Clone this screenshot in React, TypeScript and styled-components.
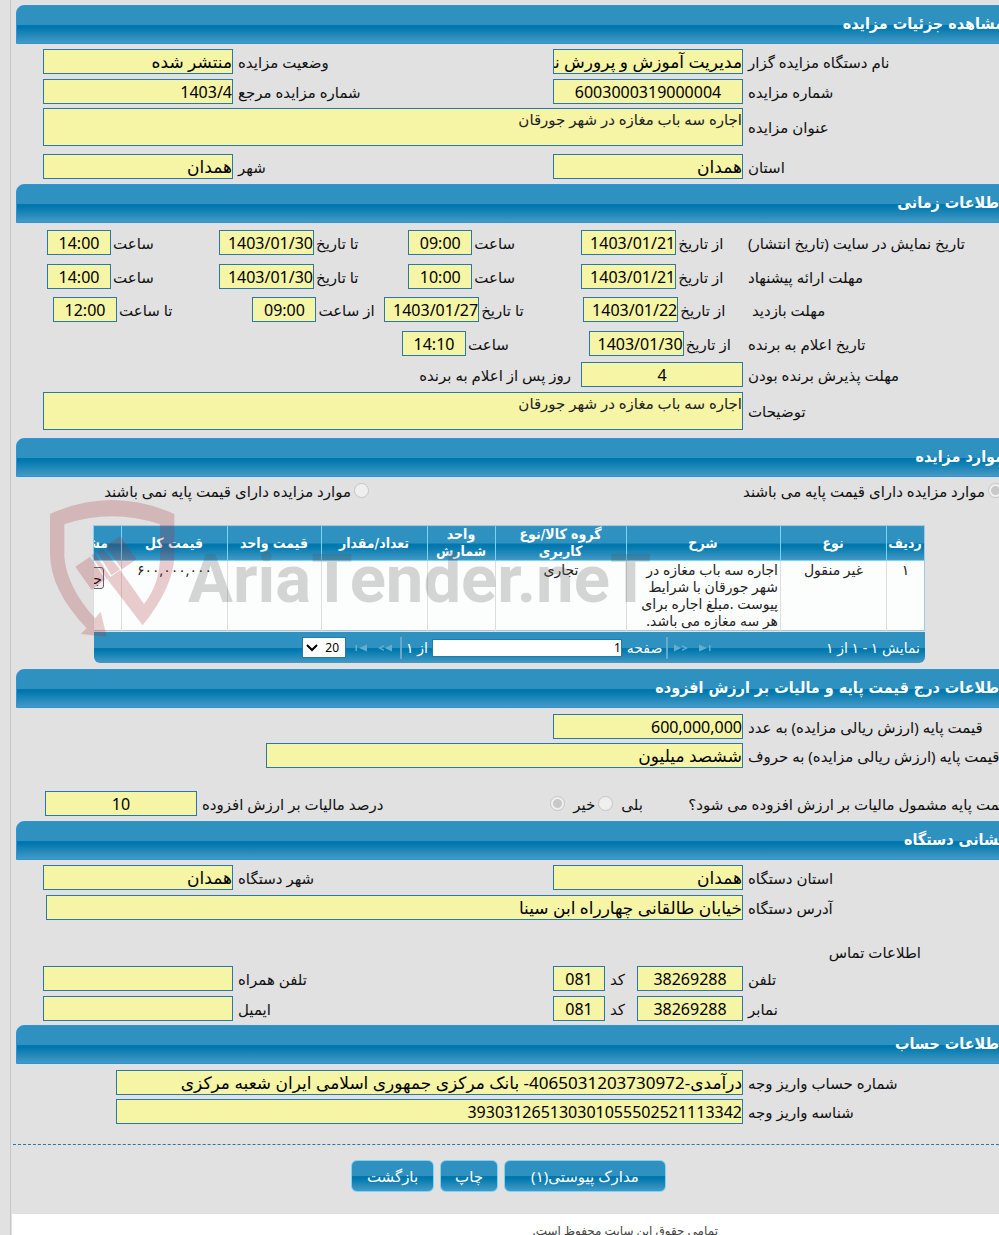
import React, { useId } from "react";
import styled, { createGlobalStyle } from "styled-components";

const GlobalStyle = createGlobalStyle`
  * { box-sizing: border-box; }
  body {
    margin: 0;
    background: #e1e1e1;
    color: #111;
    font-family: "Noto Sans", "DejaVu Sans", sans-serif;
    font-size: 15px;
    line-height: 20px;
  }
  input, textarea, button, select { font-family: inherit; margin: 0; }
`;

const headingFont = '"DejaVu Sans Condensed", "DejaVu Sans", sans-serif';
const glossy = "linear-gradient(#2f91c0 0 50%, #0078ae 51%, #0078ae 58%, #459ac5 100%)";

const Page = styled.div`
  overflow: hidden;
  padding-left: 10px;
`;

const Frame = styled.main`
  direction: rtl;
  border-left: 1px solid #c8c8c8;
  padding: 5px 0 0 1px;
`;

/* The form is wider than the window and runs off its right edge. */
const Wide = styled.div`
  margin-right: -12px;
`;

const Section = styled.section<{ $bottom?: number }>`
  position: relative;
  padding-bottom: ${(p) => p.$bottom ?? 5}px;
`;

const Title = styled.h2`
  margin: 0 0 0 4px;
  height: 39px;
  padding: 0 6px;
  border: 1px solid #2d93e0;
  border-radius: 8px 8px 0 0;
  background: ${glossy};
  color: #fff;
  font-family: ${headingFont};
  font-size: 16px;
  font-weight: 700;
  line-height: 36px;
  white-space: nowrap;
`;

const Row = styled.div<{ $top?: number; $end?: number }>`
  display: flex;
  align-items: center;
  margin-top: ${(p) => p.$top ?? 5}px;
  padding-left: ${(p) => p.$end ?? 31}px;
`;

const Label = styled.label<{ $grow?: number; $width?: number; $tight?: boolean }>`
  flex: ${(p) => (p.$width ? `0 0 ${p.$width}px` : `${p.$grow ?? 1} 1 0`)};
  min-width: 0;
  padding-left: ${(p) => (p.$tight ? 2 : 5)}px;
  text-align: left;
  white-space: nowrap;
`;

const Field = styled.input<{ $width?: number; $numeric?: boolean; $center?: boolean }>`
  flex: ${(p) => (p.$width ? `0 0 ${p.$width}px` : "1 1 0")};
  width: ${(p) => (p.$width ? `${p.$width}px` : "auto")};
  min-width: 0;
  height: 25px;
  padding: 0;
  border: 1px solid #2779aa;
  border-radius: 0;
  background: #f6f4a5;
  color: #000;
  font-size: ${(p) => (p.$numeric ? 16 : 17)}px;
  text-align: ${(p) => (p.$center ? "center" : "right")};
  outline-color: #2779aa;
`;

const Area = styled.textarea`
  flex: 1 1 0;
  height: 38px;
  padding: 0;
  border: 1px solid #2779aa;
  background: #f6f4a5;
  color: #222;
  font-size: 15px;
  line-height: 20px;
  resize: none;
`;

const Note = styled.span`
  flex: 1;
  padding-right: 10px;
`;

const Radio = styled.input.attrs({ type: "radio" })`
  appearance: none;
  flex: none;
  width: 15px;
  height: 15px;
  border: 1px solid #c6c6c6;
  border-radius: 50%;
  background: #efefef;
  &:checked { background: radial-gradient(circle, #c8c8c8 0 4px, #efefef 5px); }
`;

const ModeRow = styled.div`
  display: flex;
  justify-content: space-between;
  margin: 5px 8px 26px 357px;
  height: 17px;
`;

const Option = styled.label<{ $gap?: number }>`
  display: flex;
  align-items: center;
  gap: ${(p) => p.$gap ?? 3}px;
  white-space: nowrap;
`;

const OptionEnd = styled(Option)`
  width: 0;
`;

const TaxChoice = styled.div`
  display: flex;
  gap: 3px;
  padding-right: 43px;
`;

const ContactTitle = styled.h3`
  margin: 22px 90px 4px 0;
  font-size: 15px;
  font-weight: 400;
`;

const Grid = styled.div`
  margin: 0 86px 0 81px;
  overflow: hidden;
`;

const Table = styled.table`
  width: 100%;
  table-layout: fixed;
  border-collapse: collapse;
  border: 1px solid #a0c8e0;
  color: #222;
  font-size: 14px;
  line-height: 17px;
`;

const Head = styled.th<{ $width?: number; $cut?: boolean }>`
  width: ${(p) => (p.$width ? `${p.$width}px` : "auto")};
  height: 35px;
  padding: 0 ${(p) => (p.$cut ? 13 : 1)}px 0 0;
  overflow: hidden;
  border-left: 1px solid #77d5f7;
  border-bottom: 1px solid #77d5f7;
  background: ${glossy};
  color: #fff;
  font-family: ${headingFont};
  font-size: 14px;
  text-align: ${(p) => (p.$cut ? "right" : "center")};
  white-space: ${(p) => (p.$cut ? "nowrap" : "normal")};
`;

const Cell = styled.td<{ $start?: boolean; $cut?: boolean }>`
  height: 70px;
  padding: 0 ${(p) => (p.$cut ? 17 : 2)}px 0 ${(p) => (p.$cut ? 0 : 2)}px;
  overflow: hidden;
  border-left: 1px solid #ddd;
  background: #fcfdfd;
  text-align: ${(p) => (p.$start || p.$cut ? "right" : "center")};
  vertical-align: top;
  white-space: ${(p) => (p.$cut ? "nowrap" : "normal")};
`;

const DetailButton = styled.button`
  height: 22px;
  margin-top: 6px;
  padding: 0 1px;
  border: 1px solid #666;
  border-radius: 3px;
  background: #efefef;
  font-size: 14px;
`;

const Pager = styled.div`
  display: flex;
  align-items: center;
  height: 31px;
  margin: 1px 0 0 1px;
  padding: 0 5px;
  border-radius: 0 0 6px 6px;
  background: ${glossy};
  color: #fff;
  font-size: 14px;
`;

const PagerInfo = styled.span`
  flex: 1;
`;

const PagerTools = styled.div`
  display: flex;
  align-items: center;
  gap: 4px;
  margin-left: 203px;
`;

const ArrowButton = styled.button`
  display: flex;
  width: 20px;
  padding: 0 2px;
  border: 0;
  background: none;
`;

const Separator = styled.span`
  width: 2px;
  height: 22px;
  background: #67a9cb;
`;

const PageLabel = styled.label`
  display: flex;
  align-items: center;
  gap: 5px;
`;

const PageInput = styled.input`
  width: 190px;
  height: 18px;
  padding: 0;
  border: 1px solid #2779aa;
  font-size: 12px;
`;

const SelectBox = styled.span`
  position: relative;
  display: flex;
  margin-right: 2px;
  svg { position: absolute; left: 4px; top: 7px; pointer-events: none; }
`;

const SizeSelect = styled.select`
  appearance: none;
  width: 44px;
  height: 21px;
  padding: 0 6px 0 0;
  border: 1px solid #2779aa;
  border-radius: 0;
  background: #fff;
  font-size: 12px;
`;

const Watermark = styled.div`
  position: absolute;
  left: 38px;
  top: 61px;
  display: flex;
  direction: ltr;
  pointer-events: none;
  opacity: 0.23;
`;

const Wordmark = styled.span`
  margin-top: 31px;
  color: #505050;
  font-family: Roboto, sans-serif;
  font-size: 67px;
  font-weight: 700;
  line-height: 98px;
`;

const Actions = styled.div`
  display: flex;
  justify-content: center;
  gap: 6px;
  margin: 20px 0 0 1px;
  padding: 15px 5px 22px 10px;
  border-top: 1px dashed #2779aa;
`;

const Action = styled.button<{ $width: number }>`
  width: ${(p) => p.$width}px;
  height: 32px;
  border: 1px solid #77d5f7;
  border-radius: 6px;
  background: ${glossy};
  color: #fff;
  font-size: 15px;
`;

const Footer = styled.footer`
  height: 21px;
  overflow: hidden;
  padding: 7px 281px 0 0;
  background: #fff;
  color: #444;
  font-size: 12px;
`;

type EntryProps = {
  label: string;
  value?: string;
  width?: number;
  grow?: number;
  labelWidth?: number;
  numeric?: boolean;
  center?: boolean;
  tight?: boolean;
};

function Entry({ label, value = "", width, grow, labelWidth, numeric, center, tight }: EntryProps) {
  const id = useId();
  return (
    <>
      <Label htmlFor={id} $grow={grow} $width={labelWidth} $tight={tight}>{label}</Label>
      <Field id={id} readOnly defaultValue={value} $width={width} $numeric={numeric} $center={center} />
    </>
  );
}

const FIRST = 268;

function TextEntry({ label, value }: { label: string; value: string }) {
  const id = useId();
  return (
    <>
      <Label htmlFor={id} $width={FIRST}>{label}</Label>
      <Area id={id} readOnly defaultValue={value} />
    </>
  );
}

const DateEntry = (p: EntryProps) => <Entry width={95} numeric tight {...p} />;
const TimeEntry = (p: EntryProps) => <Entry width={64} numeric center tight {...p} />;

const Lead = styled.span`
  flex: 0 0 ${FIRST}px;
  padding-left: 5px;
  text-align: left;
`;

function Arrow({ kind, label }: { kind: "last" | "next" | "prev" | "first"; label: string }) {
  const paths = {
    last: "M1 4.500l8 3.500-8 3.500zM11 5h1.500v6h-1.500z",
    next: "M0 4.500l7 3.500-7 3.500zM8 5l6 3-6 3v-1.500l3-1.500-3-1.500z",
    prev: "M14 4.500l-7 3.500 7 3.500zM6 5l-6 3 6 3v-1.500l-3-1.500 3-1.500z",
    first: "M13 4.500l-8 3.500 8 3.500zM1.500 5h1.500v6h-1.500z",
  };
  return (
    <ArrowButton type="button" aria-label={label} disabled>
      <svg width="16" height="16" viewBox="0 0 16 16" fill="#62add0"><path d={paths[kind]} /></svg>
    </ArrowButton>
  );
}

export default function App() {
  return (
    <Page>
      <GlobalStyle />
      <Frame lang="fa">
        <Wide>
          <Section>
            <Title>مشاهده جزئیات مزایده</Title>
            <Row>
              <Entry label="نام دستگاه مزایده گزار" labelWidth={FIRST} width={190} value="مدیریت آموزش و پرورش ناحیه" />
              <Entry label="وضعیت مزایده" width={190} value="منتشر شده" />
            </Row>
            <Row>
              <Entry label="شماره مزایده" labelWidth={FIRST} width={190} numeric center value="6003000319000004" />
              <Entry label="شماره مزایده مرجع" width={190} numeric value="1403/4" />
            </Row>
            <Row $top={4}><TextEntry label="عنوان مزایده" value="اجاره سه باب مغازه در شهر جورقان" /></Row>
            <Row $top={8}>
              <Entry label="استان" labelWidth={FIRST} width={190} value="همدان" />
              <Entry label="شهر" width={190} value="همدان" />
            </Row>
          </Section>

          <Section $bottom={8}>
            <Title>اطلاعات زمانی</Title>
            <Row $top={7} $end={35}>
              <Lead>تاریخ نمایش در سایت (تاریخ انتشار)</Lead>
              <DateEntry label="از تاریخ" grow={66} value="1403/01/21" />
              <TimeEntry label="ساعت" grow={109} value="09:00" />
              <DateEntry label="تا تاریخ" grow={94} value="1403/01/30" />
              <TimeEntry label="ساعت" grow={108} value="14:00" />
            </Row>
            <Row $top={9} $end={35}>
              <Lead>مهلت ارائه پیشنهاد</Lead>
              <DateEntry label="از تاریخ" grow={66} value="1403/01/21" />
              <TimeEntry label="ساعت" grow={109} value="10:00" />
              <DateEntry label="تا تاریخ" grow={94} value="1403/01/30" />
              <TimeEntry label="ساعت" grow={108} value="14:00" />
            </Row>
            <Row $top={8} $end={41}>
              <Lead>مهلت بازدید&nbsp;</Lead>
              <DateEntry label="از تاریخ" grow={64} value="1403/01/22" />
              <DateEntry label="تا تاریخ" grow={104} value="1403/01/27" />
              <TimeEntry label="از ساعت" grow={67} value="09:00" />
              <TimeEntry label="تا ساعت" grow={136} value="12:00" />
            </Row>
            <Row $top={9} $end={390}>
              <Lead>تاریخ اعلام به برنده</Lead>
              <DateEntry label="از تاریخ" grow={58} value="1403/01/30" />
              <TimeEntry label="ساعت" grow={122} value="14:10" />
            </Row>
            <Row $top={6}>
              <Entry label="مهلت پذیرش برنده بودن" labelWidth={FIRST} width={162} numeric center value="4" />
              <Note>روز پس از اعلام به برنده</Note>
            </Row>
            <Row><TextEntry label="توضیحات" value="اجاره سه باب مغازه در شهر جورقان" /></Row>
          </Section>

          <Section $bottom={6}>
            <Title>موارد مزایده</Title>
            <ModeRow>
              <Option><Radio name="mode" disabled defaultChecked />موارد مزایده دارای قیمت پایه می باشند</Option>
              <OptionEnd><Radio name="mode" disabled />موارد مزایده دارای قیمت پایه نمی باشند</OptionEnd>
            </ModeRow>
            <Grid>
              <Table>
                <thead>
                  <tr>
                    <Head $width={38}>ردیف</Head>
                    <Head $width={106}>نوع</Head>
                    <Head>شرح</Head>
                    <Head $width={131}>گروه کالا/نوع کاربری</Head>
                    <Head $width={68}>واحد شمارش</Head>
                    <Head $width={106}>تعداد/مقدار</Head>
                    <Head $width={94}>قیمت واحد</Head>
                    <Head $width={106}>قیمت کل</Head>
                    <Head $width={28} $cut>مشاهده</Head>
                  </tr>
                </thead>
                <tbody>
                  <tr>
                    <Cell>۱</Cell>
                    <Cell>غیر منقول</Cell>
                    <Cell $start>اجاره سه باب مغازه در شهر جورقان با شرایط پیوست .مبلغ اجاره برای هر سه مغازه می باشد.</Cell>
                    <Cell>تجاری</Cell>
                    <Cell />
                    <Cell />
                    <Cell />
                    <Cell>۶۰۰,۰۰۰,۰۰۰</Cell>
                    <Cell $cut><DetailButton type="button">جزئیات</DetailButton></Cell>
                  </tr>
                </tbody>
              </Table>
              <Pager>
                <PagerInfo>نمایش ۱ - ۱ از ۱</PagerInfo>
                <PagerTools>
                  <Arrow kind="last" label="اولین صفحه" />
                  <Arrow kind="next" label="صفحه قبل" />
                  <Separator />
                  <PageLabel>صفحه<PageInput defaultValue="1" /></PageLabel>
                  <span>از ۱</span>
                  <Separator />
                  <Arrow kind="prev" label="صفحه بعد" />
                  <Arrow kind="first" label="آخرین صفحه" />
                  <SelectBox>
                    <SizeSelect aria-label="تعداد در صفحه" defaultValue="20"><option>20</option></SizeSelect>
                    <svg width="12" height="8" viewBox="0 0 12 8" fill="none" stroke="#000" strokeWidth="2"><path d="M1 1l5 5 5-5" /></svg>
                  </SelectBox>
                </PagerTools>
              </Pager>
            </Grid>
            <Watermark>
              <svg width="138" height="140" viewBox="30 27 414 420" fill="#a92a30">
                <path d="M30 72Q215 -12 403 72V200Q400 290 308 406L202 268 240 240 312 342Q360 280 360 200V103Q215 55 73 103V200Q80 290 165 385L182 365 200 440 122 432 140 415Q30 300 30 190Z" />
                <path d="M106 230L150 200 196 268 155 300ZM196 168L240 138 290 208 246 238ZM154 196L164 190 212 262 200 268ZM172 186L188 176 240 238 214 256Z" />
              </svg>
              <Wordmark>AriaTender.neT</Wordmark>
            </Watermark>
          </Section>

          <Section>
            <Title>اطلاعات درج قیمت پایه و مالیات بر ارزش افزوده</Title>
            <Row $top={6}>
              <Entry label="قیمت پایه (ارزش ریالی مزایده) به عدد" labelWidth={FIRST} width={190} numeric value="600,000,000" />
            </Row>
            <Row $top={4} $end={254}>
              <Entry label="قیمت پایه (ارزش ریالی مزایده) به حروف" labelWidth={FIRST} value="ششصد میلیون" />
            </Row>
            <Row $top={23} $end={33}>
              <Label as="span" $width={325}>قیمت پایه مشمول مالیات بر ارزش افزوده می شود؟</Label>
              <TaxChoice>
                <Option $gap={8}>بلی<Radio name="tax" disabled /></Option>
                <Option $gap={8}>خیر<Radio name="tax" disabled defaultChecked /></Option>
              </TaxChoice>
              <Entry label="درصد مالیات بر ارزش افزوده" width={152} numeric center value="10" />
            </Row>
          </Section>

          <Section $bottom={4}>
            <Title>نشانی دستگاه</Title>
            <Row>
              <Entry label="استان دستگاه" labelWidth={FIRST} width={190} value="همدان" />
              <Entry label="شهر دستگاه" width={190} value="همدان" />
            </Row>
            <Row $end={34}>
              <Entry label="آدرس دستگاه" labelWidth={FIRST} value="خیابان طالقانی چهارراه ابن سینا" />
            </Row>
            <ContactTitle>اطلاعات تماس</ContactTitle>
            <Row $top={4}>
              <Entry label="تلفن" labelWidth={FIRST} width={106} numeric center value="38269288" />
              <Entry label="کد" labelWidth={32} width={52} numeric center value="081" />
              <Entry label="تلفن همراه" width={190} />
            </Row>
            <Row>
              <Entry label="نمابر" labelWidth={FIRST} width={106} numeric center value="38269288" />
              <Entry label="کد" labelWidth={32} width={52} numeric center value="081" />
              <Entry label="ایمیل" width={190} />
            </Row>
          </Section>

          <Section $bottom={0}>
            <Title>اطلاعات حساب</Title>
            <Row $top={6} $end={104}>
              <Entry label="شماره حساب واریز وجه" labelWidth={FIRST} value="درآمدی-4065031203730972- بانک مرکزی جمهوری اسلامی ایران شعبه مرکزی" />
            </Row>
            <Row $top={4} $end={104}>
              <Entry label="شناسه واریز وجه" labelWidth={FIRST} numeric value="393031265130301055502521113342" />
            </Row>
          </Section>
        </Wide>
        <Actions>
          <Action type="button" $width={162}>مدارک پیوستی(۱)</Action>
          <Action type="button" $width={58}>چاپ</Action>
          <Action type="button" $width={83}>بازگشت</Action>
        </Actions>
        <Footer>تمامی حقوق این سایت محفوظ است.</Footer>
      </Frame>
    </Page>
  );
}
